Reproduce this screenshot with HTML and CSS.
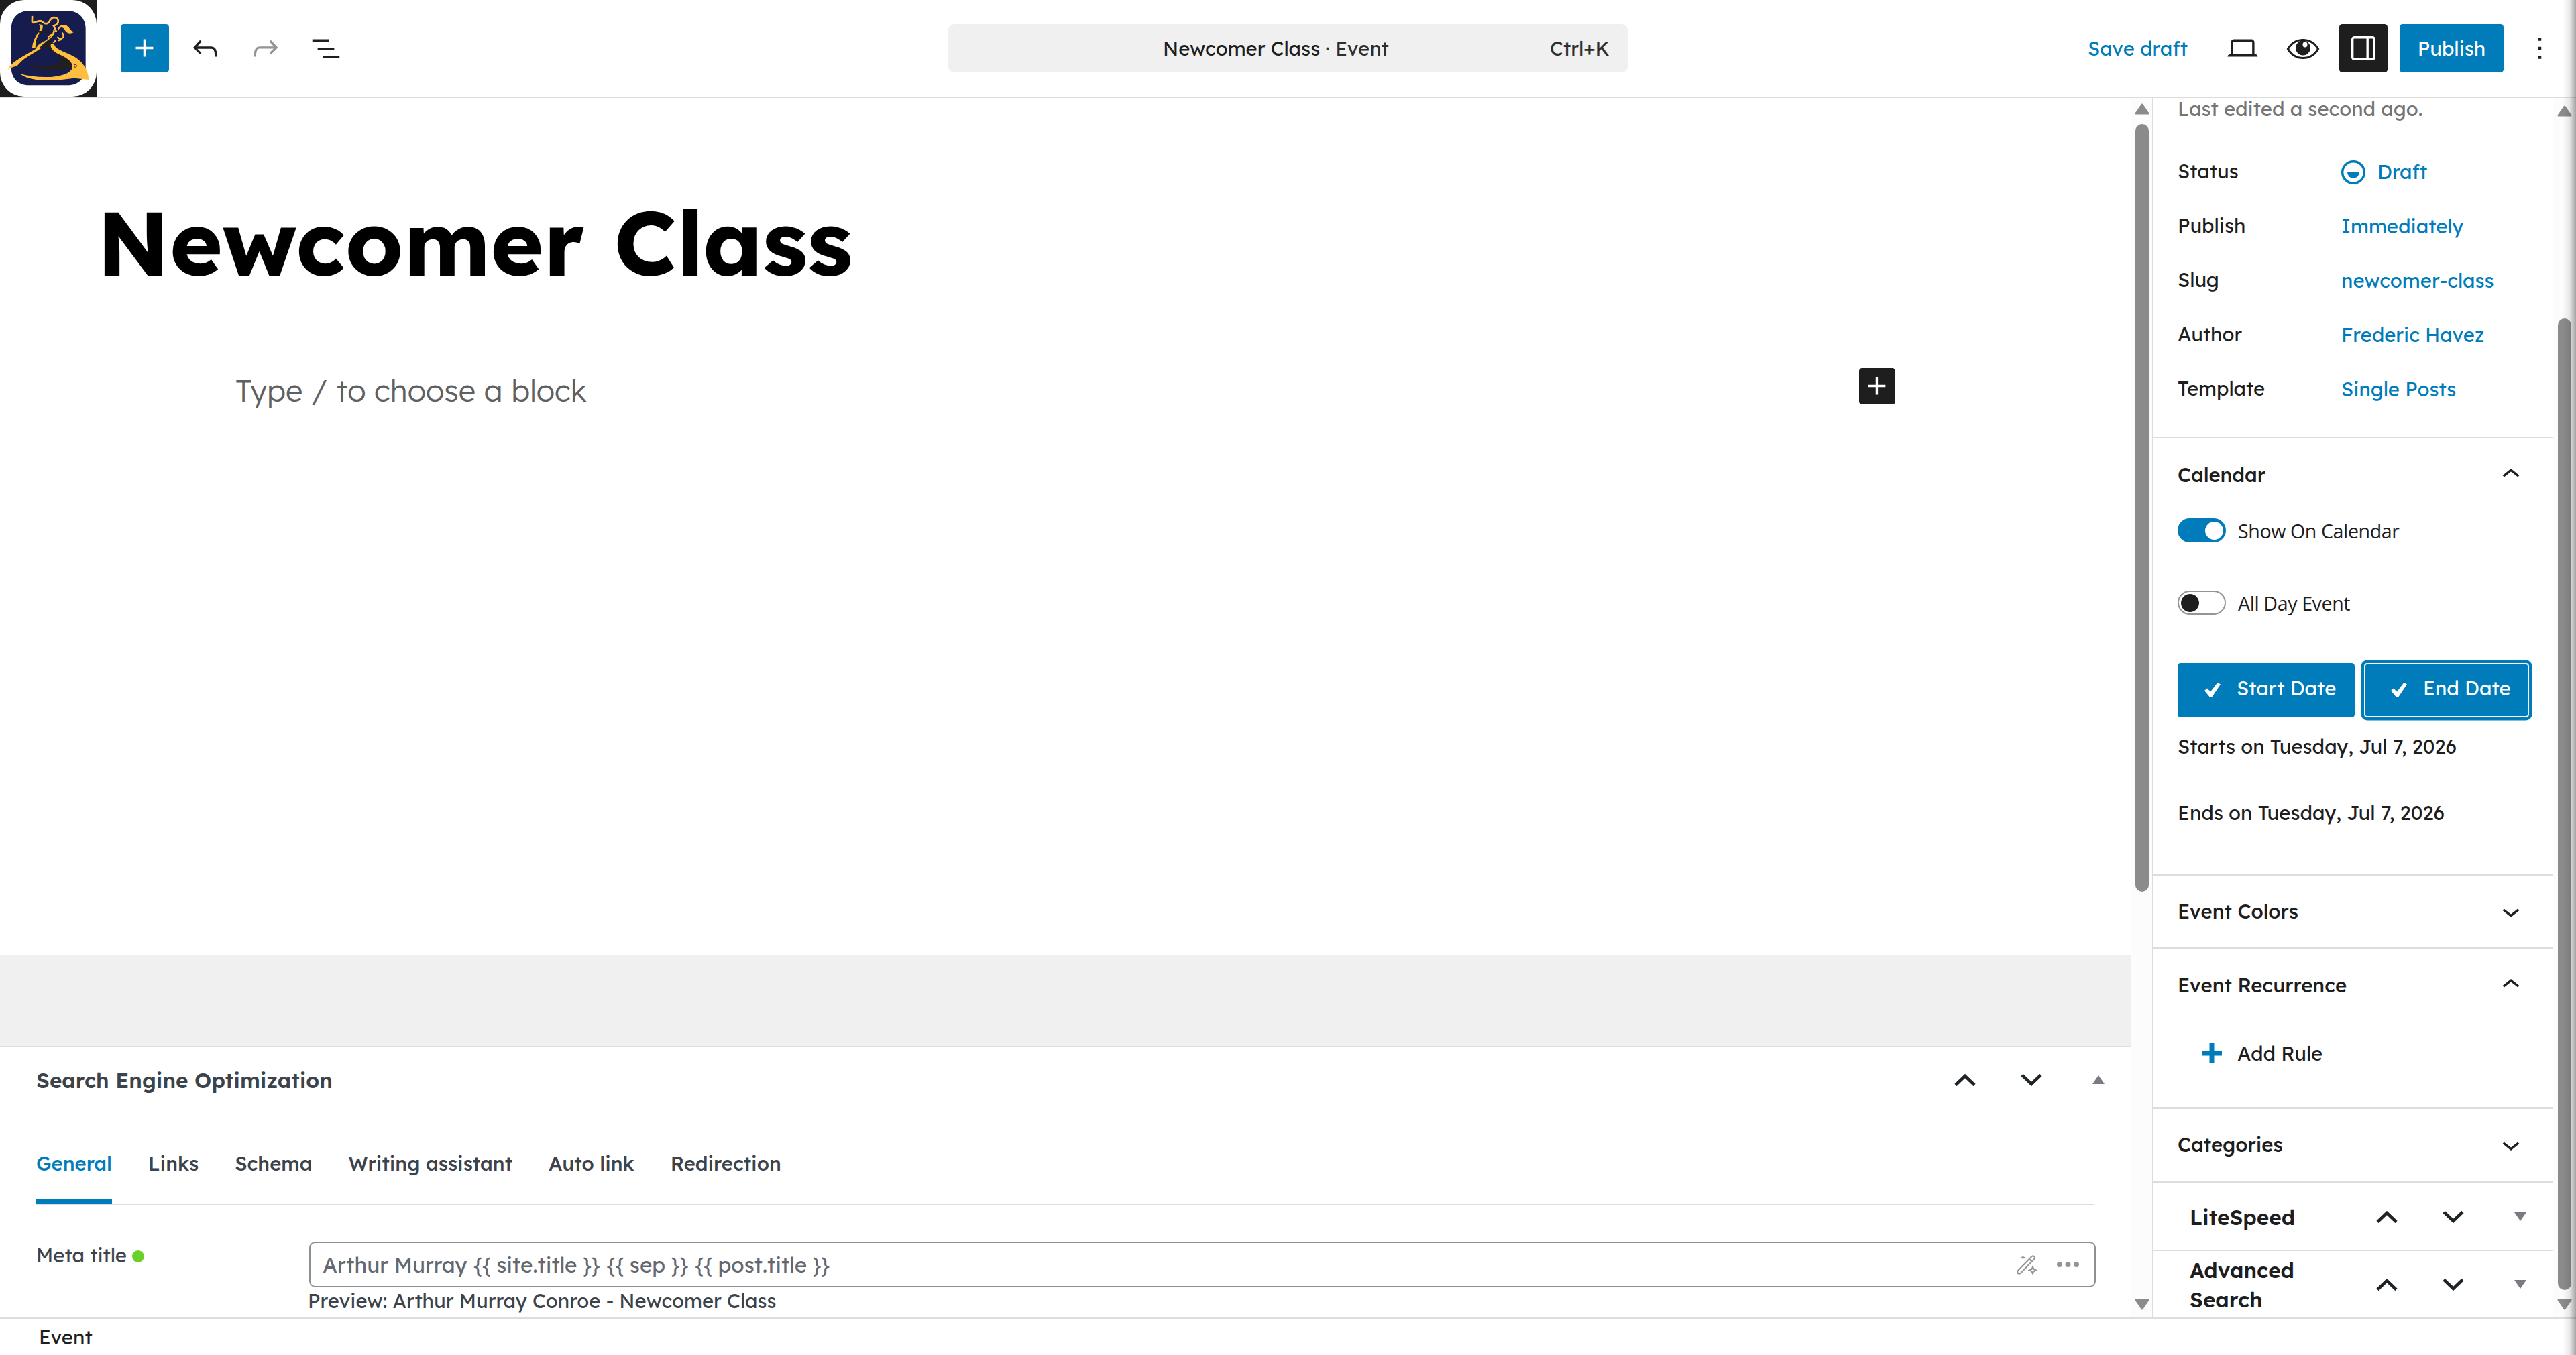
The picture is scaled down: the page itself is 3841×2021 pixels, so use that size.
FILE: index.html
```html
<!DOCTYPE html>
<html lang="en">

<head>
    <meta charset="UTF-8">
    <meta name="viewport" content="width=device-width, initial-scale=1.0">
    <title>Newcomer Class - Edit Event</title>
    <link rel="stylesheet" href="styles.css">
</head>

<body>
    <!-- Shared icons -->
    <svg class="sprite" xmlns="http://www.w3.org/2000/svg">
        <symbol id="plus" viewBox="0 0 24 24">
            <path d="M11 12.5V17.5H12.5V12.5H17.5V11H12.5V6H11V11H6V12.5H11Z" />
        </symbol>
        <symbol id="chevron-up" viewBox="0 0 24 24">
            <path d="M6.5 12.4L12 8l5.5 4.4-.9 1.2L12 10l-4.5 3.6-1-1.2z" />
        </symbol>
        <symbol id="chevron-down" viewBox="0 0 24 24">
            <path d="M17.5 11.6L12 16l-5.5-4.4.9-1.2L12 14l4.5-3.6 1 1.2z" />
        </symbol>
        <symbol id="order-up" viewBox="0 0 32 18">
            <path d="M2 16.5L16 3l14 13.5" fill="none" stroke="#1d2327" stroke-width="4.6" />
        </symbol>
        <symbol id="order-down" viewBox="0 0 32 18">
            <path d="M2 1.5L16 15 30 1.5" fill="none" stroke="#1d2327" stroke-width="4.6" />
        </symbol>
        <symbol id="check" viewBox="0 0 24 22">
            <path d="M0 12l4-3.5 5 5L19.5 0 24 2.5 11.5 21H7.5z" />
        </symbol>
        <symbol id="arrow" viewBox="0 0 22 17">
            <path d="M11 2L20 15H2z" stroke-width="3" stroke-linejoin="round" />
        </symbol>
    </svg>

    <header class="header">
        <svg class="logo" viewBox="0 0 432 432">
            <rect x="0" y="0" width="432" height="432" rx="108" fill="#fff" />
            <path fill="#161c4d" d="M130 49H302C352 49 383 82 383 130V300C383 350 352 382 302 382H130C80 382 50 350 50 300V130C50 82 80 49 130 49z" />
            <path fill="#231f20" d="M225 168C205 190 170 215 95 275 120 268 175 222 215 208 216 226 245 240 262 252 286 270 270 306 122 293 180 318 260 314 323 305 327 280 305 258 268 245 238 234 226 215 228 195L240 140 222 150z" />
            <path fill="#ffbe3d" d="M36 311C50 275 110 250 165 215L184 215C140 245 115 255 95 275L75 296Q58 298 36 311z" />
            <path fill="#ffbe3d" d="M228 195C222 215 240 230 258 240 315 266 326 280 323 305 305 350 180 355 88 330 140 368 230 364 332 350L397 357C395 310 366 270 325 250 285 228 245 222 242 195z" />
            <path fill="#ffbe3d" d="M174 108L190 112C194 125 188 137 178 147 164 168 156 185 164 215L144 214C146 185 160 160 175 138 180 125 180 120 174 108z" />
            <path fill="#ffbe3d" d="M164 215C170 190 195 195 232 158L240 130 246 140C240 170 205 180 178 212z" />
            <path fill="#231f20" d="M155 133C175 145 195 130 235 140L228 147C205 140 190 148 180 150 172 170 165 185 166 205L158 214C158 185 172 160 176 146 165 146 158 142 155 133z" />
            <path fill="none" stroke="#ffbe3d" stroke-width="8" d="M144 72C146 90 138 104 152 101 170 96 180 88 190 98 202 110 215 108 222 94 234 70 264 76 260 98 258 110 248 112 240 116L252 142" />
            <path fill="#ffbe3d" d="M258 126C275 104 300 108 312 128 318 138 325 141 333 142 318 154 298 150 290 134 282 118 268 120 262 134z" />
            <path fill="none" stroke="#ffbe3d" stroke-width="7" d="M278 146C290 160 284 172 268 174L256 166M276 176L258 182M250 180L238 192M214 166L236 152" />
            <circle cx="337" cy="295" r="6" fill="none" stroke="#231f20" stroke-width="3" />
        </svg>
        <div class="tools">
            <button class="icon-btn primary"><svg class="icon"><use href="#plus" /></svg></button>
            <button class="icon-btn">
                <svg class="icon" viewBox="0 0 24 24"><path d="M18.3 11.7c-.6-.6-1.4-.9-2.3-.9H6.7l2.9-3.3-1.1-1-4.5 5L8.5 16l1-1-2.7-2.7H16c.5 0 .9.2 1.3.5 1 1 1 3.4 1 4.5v.3h1.5v-.2c0-1.5 0-4.3-1.5-5.7z" /></svg>
            </button>
            <button class="icon-btn disabled">
                <svg class="icon" viewBox="0 0 24 24"><path d="M15.6 6.5l-1.1 1 2.9 3.3H8c-.9 0-1.7.3-2.3.9-1.4 1.5-1.4 4.2-1.4 5.6v.2h1.5v-.3c0-1.1 0-3.5 1-4.5.3-.3.7-.5 1.3-.5h9.2L14.5 15l1.1 1.1 4.6-4.6-4.6-5z" /></svg>
            </button>
            <button class="icon-btn">
                <svg class="icon" viewBox="0 0 24 24"><path d="M3 6h11v1.5H3V6Zm3.5 5.5h11V13h-11v-1.5ZM21 17H10v1.5h11V17Z" /></svg>
            </button>
        </div>
        <div class="command">
            <span class="command-title"><b>Newcomer Class</b> · Event</span>
            <span class="shortcut">Ctrl+K</span>
        </div>
        <div class="settings">
            <button class="save">Save draft</button>
            <button class="icon-btn">
                <svg class="icon" viewBox="0 0 24 24"><path d="M20.5 16h-.7V8c0-1.1-.9-2-2-2H6.2c-1.1 0-2 .9-2 2v8h-.7c-.8 0-1.5.7-1.5 1.5h20c0-.8-.7-1.5-1.5-1.5zM5.7 8c0-.3.2-.5.5-.5h11.6c.3 0 .5.2.5.5v7.6H5.7V8z" /></svg>
            </button>
            <button class="icon-btn">
                <svg class="icon" viewBox="0 0 54 54">
                    <path d="M4.5 28C15 10 39 10 49.5 28 39 46 15 46 4.5 28z" fill="none" stroke="#1e1e1e" stroke-width="3.2" />
                    <circle cx="27" cy="26.5" r="11" />
                    <ellipse cx="30" cy="21.5" rx="3.5" ry="4" fill="#fff" />
                </svg>
            </button>
            <button class="icon-btn pressed">
                <svg class="icon" viewBox="0 0 24 24"><path d="M18 4H6c-1.1 0-2 .9-2 2v12c0 1.1.9 2 2 2h12c1.1 0 2-.9 2-2V6c0-1.1-.9-2-2-2zm-4 14.5H6c-.3 0-.5-.2-.5-.5V6c0-.3.2-.5.5-.5h8v13zm4.5-.5c0 .3-.2.5-.5.5h-2.5v-13H18c.3 0 .5.2.5.5v12z" /></svg>
            </button>
            <button class="publish">Publish</button>
            <button class="icon-btn">
                <svg class="icon" viewBox="0 0 24 24"><path d="M13 19h-2v-2h2v2zm0-6h-2v-2h2v2zm0-6h-2V5h2v2z" /></svg>
            </button>
        </div>
    </header>

    <main class="main">
        <div class="editor">
            <div class="canvas">
                <h1>Newcomer Class</h1>
                <div class="block">
                    <p>Type / to choose a block</p>
                    <button class="inserter"><svg class="icon"><use href="#plus" /></svg></button>
                </div>
            </div>
            <div class="spacer"></div>
            <section class="seo">
                <div class="seo-head">
                    <h2>Search Engine Optimization</h2>
                    <svg class="order"><use href="#order-up" /></svg>
                    <svg class="order"><use href="#order-down" /></svg>
                    <span class="tri up"></span>
                </div>
                <nav class="tabs">
                    <a class="active">General</a>
                    <a>Links</a>
                    <a>Schema</a>
                    <a>Writing assistant</a>
                    <a>Auto link</a>
                    <a>Redirection</a>
                </nav>
                <div class="field">
                    <label>Meta title <i class="dot"></i></label>
                    <div class="field-body">
                        <div class="input">
                            <span>Arthur Murray {{ site.title }} {{ sep }} {{ post.title }}</span>
                            <svg class="wand" viewBox="0 0 30 30" fill="none" stroke="#949494" stroke-width="2">
                                <path d="M2 24L22.5 3Q25 1.5 26.5 3.5 27.5 5.5 26 7L6 28Q3.5 29.5 2 28 .5 26 2 24zM19 7l4 4" />
                                <path d="M9.5 0l1 3.5 3 1-3 1-1 3.5-1-3.5-3-1 3-1z" fill="#949494" stroke="none" />
                                <path d="M24 18.5l1.5 3.5 3.5 1.5-3.5 1.5-1.5 3.5-1.5-3.5-3.5-1.5 3.5-1.5z" />
                            </svg>
                            <svg class="more" viewBox="0 0 34 8"><circle cx="4" cy="4" r="4" /><circle cx="16.500" cy="4" r="4" /><circle cx="29" cy="4" r="4" /></svg>
                        </div>
                        <p class="preview">Preview: Arthur Murray Conroe - Newcomer Class</p>
                    </div>
                </div>
            </section>
        </div>

        <div class="scrollbar">
            <svg class="arrow"><use href="#arrow" /></svg>
            <div class="thumb thumb-editor"></div>
            <svg class="arrow down"><use href="#arrow" /></svg>
        </div>

        <aside class="sidebar">
            <section class="summary">
                <p class="edited">Last edited a second ago.</p>
                <dl>
                    <dt>Status</dt>
                    <dd>
                        <svg class="status" viewBox="0 0 36 36"><circle cx="18" cy="18" r="16.3" fill="none" stroke="#007cba" stroke-width="3.4" /><path d="M9 18a9 9 0 0 0 18 0z" /></svg>
                        Draft
                    </dd>
                    <dt>Publish</dt>
                    <dd>Immediately</dd>
                    <dt>Slug</dt>
                    <dd>newcomer-class</dd>
                    <dt>Author</dt>
                    <dd>Frederic Havez</dd>
                    <dt>Template</dt>
                    <dd>Single Posts</dd>
                </dl>
            </section>

            <section class="panel calendar">
                <h3>Calendar <svg class="icon"><use href="#chevron-up" /></svg></h3>
                <div class="toggle-row"><span class="toggle on"></span><label>Show On Calendar</label></div>
                <div class="toggle-row"><span class="toggle"></span><label>All Day Event</label></div>
                <div class="dates">
                    <button class="date-btn"><svg class="check"><use href="#check" /></svg>Start Date</button>
                    <button class="date-btn focused"><svg class="check"><use href="#check" /></svg>End Date</button>
                </div>
                <p class="date-text">Starts on Tuesday, Jul 7, 2026</p>
                <p class="date-text">Ends on Tuesday, Jul 7, 2026</p>
            </section>

            <section class="panel">
                <h3>Event Colors <svg class="icon"><use href="#chevron-down" /></svg></h3>
            </section>

            <section class="panel recurrence">
                <h3>Event Recurrence <svg class="icon"><use href="#chevron-up" /></svg></h3>
                <button class="add-rule">
                    <svg viewBox="0 0 30 30"><path d="M15 0v30M0 15h30" stroke="#007cba" stroke-width="7" /></svg>
                    Add Rule
                </button>
            </section>

            <section class="panel categories">
                <h3>Categories <svg class="icon"><use href="#chevron-down" /></svg></h3>
            </section>

            <section class="metabox">
                <h2>LiteSpeed</h2>
                <svg class="order"><use href="#order-up" /></svg>
                <svg class="order"><use href="#order-down" /></svg>
                <span class="tri"></span>
            </section>
            <section class="metabox">
                <h2>Advanced Search</h2>
                <svg class="order"><use href="#order-up" /></svg>
                <svg class="order"><use href="#order-down" /></svg>
                <span class="tri"></span>
            </section>
        </aside>

        <div class="scrollbar scrollbar-side">
            <svg class="arrow"><use href="#arrow" /></svg>
            <div class="thumb thumb-side"></div>
            <svg class="arrow down"><use href="#arrow" /></svg>
        </div>
    </main>

    <footer class="footer">Event</footer>
    <div class="edge-shadow"></div>
</body>

</html>
```

FILE: styles.css
```css
* {
    box-sizing: border-box;
}

body {
    margin: 0;
    width: 3841px;
    height: 2021px;
    display: flex;
    flex-direction: column;
    position: relative;
    overflow: hidden;
    background: #fff;
    color: #1e1e1e;
    font-family: Lexend, Inter, sans-serif;
    font-size: 29.25px;
    line-height: 44px;
}

h1, h2, h3, p, dl, dd {
    margin: 0;
    font-weight: inherit;
}

button {
    padding: 0;
    border: 0;
    background: none;
    color: inherit;
    font: inherit;
}

.sprite {
    display: none;
}

.icon {
    width: 54px;
    height: 54px;
    flex: none;
    fill: currentColor;
}

/* Header */
.header {
    height: 146px;
    flex: none;
    display: grid;
    grid-template-columns: 1414px 1013px 1fr;
    align-items: center;
    border-bottom: 2px solid #ddd;
    position: relative;
}

.logo {
    position: absolute;
    left: 0;
    top: 0;
    width: 144px;
    height: 144px;
    background: #1e1e1e;
}

.tools {
    display: flex;
    gap: 18px;
    padding-left: 180px;
}

.icon-btn {
    width: 72px;
    height: 72px;
    display: flex;
    align-items: center;
    justify-content: center;
    border-radius: 4.5px;
}

.icon-btn.primary {
    background: #007cba;
    color: #fff;
}

.icon-btn.pressed {
    background: #1e1e1e;
    color: #fff;
}

.icon-btn.disabled {
    color: #949494;
}

.command {
    height: 72px;
    display: flex;
    align-items: center;
    border-radius: 9px;
    background: #f0f0f0;
    color: #2f2f2f;
    padding: 0 27px 0 320px;
}

.command-title {
    flex: 1;
}

.command b {
    font-weight: 400;
    color: #1e1e1e;
}

.settings {
    display: flex;
    justify-content: flex-end;
    gap: 18px;
    padding-right: 18px;
}

.save {
    padding: 0 28px 0 27px;
    color: #007cba;
}

.publish {
    width: 155px;
    background: #007cba;
    border-radius: 4.5px;
    color: #fff;
}

/* Editor */
.main {
    height: 1819px;
    flex: none;
    display: flex;
}

.editor {
    width: 3177px;
    flex: none;
}

.canvas {
    height: 1279px;
    padding-top: 135px;
}

.canvas h1 {
    padding-left: 144px;
    color: #000;
    font-size: 135px;
    font-weight: 700;
    line-height: 160px;
}

.block {
    margin: 108px 351px 0;
    display: flex;
    justify-content: space-between;
}

.block p {
    padding-top: 5px;
    color: #606060;
    font-size: 45px;
    font-weight: 300;
    line-height: 56px;
}

.inserter {
    width: 54px;
    height: 54px;
    border-radius: 4.5px;
    background: #1e1e1e;
    color: #fff;
}

.inserter .icon {
    display: block;
}

.spacer {
    height: 135px;
    background: #f0f0f0;
}

.seo {
    height: 405px;
    border-top: 2px solid #ddd;
    color: #3c434a;
}

.seo-head {
    height: 99px;
    padding: 0 39px 2px 54px;
    display: flex;
    align-items: center;
}

.seo-head h2 {
    flex: 1;
    font-size: 31.5px;
    font-weight: 600;
}

.order {
    width: 32px;
    height: 18px;
    margin-right: 67px;
}

.order + .tri {
    margin-left: 8px;
}

.tri {
    width: 0;
    height: 0;
    border: 9px solid transparent;
    border-top: 13px solid #787c82;
    border-bottom: 0;
}

.tri.up {
    border-top: 0;
    border-bottom: 13px solid #787c82;
}

.tabs {
    margin: 23px 54px 54px;
    height: 114px;
    display: flex;
    gap: 54px;
    border-bottom: 2px solid #ddd;
    font-weight: 500;
    line-height: 103px;
}

.tabs .active {
    color: #007cba;
    border-bottom: 8px solid #007cba;
}

.field {
    display: flex;
    padding: 0 52px 0 54px;
}

.field label {
    width: 407px;
    line-height: 41px;
}

.dot {
    display: inline-block;
    width: 18px;
    height: 18px;
    border-radius: 50%;
    background: #68d22b;
}

.field-body {
    flex: 1;
}

.input {
    height: 68px;
    display: flex;
    align-items: center;
    padding: 0 22px 0 18px;
    border: 2px solid #8c8f94;
    border-radius: 9px;
    color: #646970;
    font-size: 31.5px;
}

.input span {
    flex: 1;
}

.wand {
    width: 30px;
    height: 30px;
    margin-right: 30px;
}

.more {
    width: 34px;
    height: 8px;
    fill: #949494;
}

.preview {
    margin-left: -2px;
    line-height: 40px;
}

/* Scrollbars */
.scrollbar {
    width: 32px;
    flex: none;
    padding: 8px 0 11px 2px;
    display: flex;
    flex-direction: column;
    align-items: center;
    background: #fcfcfc;
}

.scrollbar-side {
    width: 34px;
    padding: 11px 0;
}

.arrow {
    width: 22px;
    height: 17px;
    fill: #8b8b8b;
    stroke: #8b8b8b;
}

.arrow.down {
    margin-top: auto;
    transform: scaleY(-1);
}

.thumb {
    width: 20px;
    border-radius: 10px;
    background: #8b8b8b;
}

.thumb-editor {
    height: 1145px;
    margin-top: 14px;
}

.thumb-side {
    height: 1449px;
    margin-top: 301px;
}

/* Sidebar */
.sidebar {
    width: 598px;
    flex: none;
    border-left: 2px solid #ddd;
}

.summary {
    height: 508px;
    padding-left: 36px;
    border-bottom: 2px solid #ddd;
}

.edited {
    margin-bottom: 36px;
    color: #757575;
    line-height: 33px;
}

.summary dl {
    display: grid;
    grid-template-columns: 244px 1fr;
    grid-auto-rows: 81px;
    line-height: 81px;
}

.summary dd {
    display: flex;
    align-items: center;
    gap: 18px;
    padding-top: 2px;
    color: #007cba;
}

.status {
    width: 36px;
    height: 36px;
    fill: #007cba;
}

.panel {
    padding-left: 36px;
    border-bottom: 3px solid #ddd;
}

.panel h3 {
    height: 107px;
    padding: 0 36px 2px 0;
    display: flex;
    align-items: center;
    justify-content: space-between;
    font-size: 29.25px;
    font-weight: 500;
}

.calendar {
    height: 652px;
    border-bottom-width: 2px;
}

.panel.calendar h3 {
    margin-bottom: 12px;
    padding-bottom: 0;
}

.categories {
    border-bottom-width: 4px;
}

.toggle-row {
    height: 36px;
    margin-bottom: 72px;
    display: flex;
    align-items: center;
    gap: 18px;
    font-family: "Open Sans", sans-serif;
    font-size: 28.6px;
    letter-spacing: -0.4px;
}

.toggle-row label {
    padding-top: 2px;
}

.toggle {
    width: 72px;
    height: 36px;
    padding: 2.5px 3px;
    border: 2px solid #949494;
    border-radius: 18px;
}

.toggle::after {
    content: "";
    display: block;
    width: 27px;
    height: 27px;
    border-radius: 50%;
    background: #1e1e1e;
}

.toggle.on {
    border-color: #007cba;
    background: #007cba;
}

.toggle.on::after {
    margin-left: 36px;
    background: #fff;
}

.dates {
    display: flex;
    gap: 14px;
    margin-bottom: 21px;
}

.date-btn {
    width: 264px;
    height: 81px;
    padding: 0 0 7px 40px;
    display: flex;
    align-items: center;
    border-radius: 4.5px;
    background: #007cba;
    color: #fff;
}

.date-btn.focused {
    width: 246px;
    box-shadow: inset 0 0 0 2px #fff, 0 0 0 4.5px #007cba;
}

.check {
    width: 24px;
    height: 22px;
    margin: 5px 24px 0 0;
    fill: #fff;
}

.date-text {
    margin-bottom: 55px;
}

.recurrence {
    height: 238px;
}

.add-rule {
    height: 72px;
    margin-top: 12px;
    padding-left: 36px;
    display: flex;
    align-items: center;
    gap: 23px;
}

.add-rule svg {
    width: 30px;
    height: 30px;
}

.metabox {
    height: 101px;
    padding: 0 40px 0 54px;
    display: flex;
    align-items: center;
    border-bottom: 2px solid #ddd;
}

.metabox:last-child {
    height: 99px;
    border-bottom: 0;
}

.metabox h2 {
    width: 200px;
    margin-right: auto;
    font-size: 31.5px;
    font-weight: 600;
}

/* Footer */
.footer {
    height: 56px;
    padding-left: 58px;
    border-top: 2px solid #ddd;
    line-height: 55px;
}

.edge-shadow {
    position: absolute;
    top: 0;
    right: 0;
    width: 20px;
    height: 100%;
    background: linear-gradient(to right, rgba(0, 0, 0, 0), rgba(0, 0, 0, .08) 50%, rgba(0, 0, 0, .35));
}
```
